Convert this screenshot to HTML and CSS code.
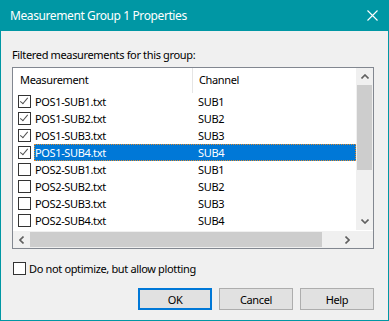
FILE: index.html
```html
<!DOCTYPE html>
<html lang="en">
<head>
<meta charset="UTF-8" />
<title>Measurement Group 1 Properties</title>
<link rel="stylesheet" href="styles.css">
</head>
<body>
  <div class="window">
    <div class="titlebar">
      <span class="title">Measurement Group 1 Properties</span>
      <svg class="close" width="11" height="11" viewBox="0 0 11 11">
        <path d="M0.5 0.5 L10.5 10.5 M10.5 0.5 L0.5 10.5" stroke="#fff" stroke-width="1.1" fill="none"/>
      </svg>
    </div>

    <div class="content">
      <div class="caption">Filtered measurements for this group:</div>

      <div class="listbox">
        <div class="list-main">
          <div class="rows">
            <div class="header">
              <div class="hcol hcol-name">Measurement</div>
              <div class="hcol">Channel</div>
            </div>
            <div class="row">
              <div class="box-cell"><span class="check on"></span></div>
              <div class="cells"><div class="cell-name">POS1-SUB1.txt</div><div class="cell-chan">SUB1</div></div>
            </div>
            <div class="row">
              <div class="box-cell"><span class="check on"></span></div>
              <div class="cells"><div class="cell-name">POS1-SUB2.txt</div><div class="cell-chan">SUB2</div></div>
            </div>
            <div class="row">
              <div class="box-cell"><span class="check on"></span></div>
              <div class="cells"><div class="cell-name">POS1-SUB3.txt</div><div class="cell-chan">SUB3</div></div>
            </div>
            <div class="row selected">
              <div class="box-cell"><span class="check on"></span></div>
              <div class="cells"><div class="cell-name">POS1-SUB4.txt</div><div class="cell-chan">SUB4</div></div>
            </div>
            <div class="row">
              <div class="box-cell"><span class="check"></span></div>
              <div class="cells"><div class="cell-name">POS2-SUB1.txt</div><div class="cell-chan">SUB1</div></div>
            </div>
            <div class="row">
              <div class="box-cell"><span class="check"></span></div>
              <div class="cells"><div class="cell-name">POS2-SUB2.txt</div><div class="cell-chan">SUB2</div></div>
            </div>
            <div class="row">
              <div class="box-cell"><span class="check"></span></div>
              <div class="cells"><div class="cell-name">POS2-SUB3.txt</div><div class="cell-chan">SUB3</div></div>
            </div>
            <div class="row">
              <div class="box-cell"><span class="check"></span></div>
              <div class="cells"><div class="cell-name">POS2-SUB4.txt</div><div class="cell-chan">SUB4</div></div>
            </div>
          </div>
          <div class="vscroll">
            <div class="sbtn">
              <svg width="8" height="5" viewBox="0 0 8 5"><path d="M0.5 4.5 L4 1 L7.5 4.5" stroke="#606060" stroke-width="1.6" fill="none"/></svg>
            </div>
            <div class="vthumb"></div>
            <div class="vtrack"></div>
            <div class="sbtn">
              <svg width="8" height="5" viewBox="0 0 8 5"><path d="M0.5 0.5 L4 4 L7.5 0.5" stroke="#606060" stroke-width="1.6" fill="none"/></svg>
            </div>
          </div>
        </div>
        <div class="hscroll">
          <div class="sbtn">
            <svg width="5" height="8" viewBox="0 0 5 8"><path d="M4.5 0.5 L1 4 L4.5 7.5" stroke="#606060" stroke-width="1.6" fill="none"/></svg>
          </div>
          <div class="hthumb"></div>
          <div class="htrack"></div>
          <div class="sbtn">
            <svg width="5" height="8" viewBox="0 0 5 8"><path d="M0.5 0.5 L4 4 L0.5 7.5" stroke="#606060" stroke-width="1.6" fill="none"/></svg>
          </div>
          <div class="corner"></div>
        </div>
      </div>

      <label class="option"><span class="check"></span>Do not optimize, but allow plotting</label>

      <div class="buttons">
        <button class="btn default">OK</button>
        <button class="btn">Cancel</button>
        <button class="btn">Help</button>
      </div>
    </div>
  </div>
</body>
</html>
```

FILE: styles.css
```css
body {
  margin: 0;
  font-family: "Noto Sans", sans-serif;
  font-size: 11px;
  letter-spacing: -0.35px;
  color: #000;
  background: #f0f0f0;
}
.window {
  width: 389px;
  height: 321px;
  box-sizing: border-box;
  border: 1px solid #0097a4;
  border-top: none;
  display: flex;
  flex-direction: column;
  background: #f0f0f0;
}
.titlebar {
  height: 31px;
  margin: 0 -1px;
  background: #0097a4;
  color: #fff;
  display: flex;
  align-items: center;
  padding: 0 11px 0 10px;
  font-size: 12px;
  letter-spacing: -0.4px;
}
.title {
  flex: 1;
}
.close {
  display: block;
}
.content {
  flex: 1;
  padding: 16px 14px 0 11px;
  display: flex;
  flex-direction: column;
}
.caption {
  height: 15px;
  line-height: 15px;
  margin-bottom: 5px;
}
.listbox {
  width: 362px;
  height: 182px;
  box-sizing: border-box;
  border: 1px solid #828790;
  background: #fff;
  display: flex;
  flex-direction: column;
}
.list-main {
  display: flex;
  height: 162px;
}
.rows {
  width: 343px;
  overflow: hidden;
}
.header {
  display: flex;
  height: 25px;
  line-height: 24px;
  white-space: nowrap;
}
.hcol {
  padding-left: 6px;
}
.hcol-name {
  width: 172px;
  padding-left: 7px;
  border-right: 1px solid #e5e5e5;
}
.row {
  display: flex;
  height: 17px;
  line-height: 17px;
  white-space: nowrap;
}
.box-cell {
  width: 21px;
  padding-left: 5px;
  box-sizing: border-box;
  display: flex;
  align-items: center;
  flex: none;
}
.cells {
  flex: 1;
  display: flex;
}
.cell-name {
  width: 158px;
  padding-left: 1px;
  box-sizing: border-box;
}
.cell-chan {
  padding-left: 6px;
}
.row.selected .cells {
  background: #0078d7;
  color: #fff;
  outline: 1px dotted #e08a2c;
  outline-offset: -1px;
}
.check {
  width: 13px;
  height: 13px;
  box-sizing: border-box;
  border: 1px solid #333;
  background: #fff;
  flex: none;
  position: relative;
}
.check.on::after {
  content: "";
  position: absolute;
  left: 3px;
  top: 0px;
  width: 3px;
  height: 7px;
  border: solid #505050;
  border-width: 0 1.5px 1.5px 0;
  transform: rotate(40deg);
}
.vscroll {
  width: 17px;
  display: flex;
  flex-direction: column;
  background: #f0f0f0;
}
.sbtn {
  width: 17px;
  height: 17px;
  display: flex;
  align-items: center;
  justify-content: center;
  background: #f0f0f0;
  flex: none;
}
.vthumb {
  height: 85px;
  margin: 0 1px;
  background: #cdcdcd;
}
.vtrack {
  flex: 1;
}
.hscroll {
  display: flex;
  height: 17px;
  background: #f0f0f0;
  margin-top: 1px;
}
.hthumb {
  width: 292px;
  margin: 1px 0;
  background: #cdcdcd;
}
.htrack {
  width: 17px;
}
.corner {
  width: 16px;
  background: #f0f0f0;
}
.option {
  display: flex;
  align-items: center;
  height: 15px;
  margin-top: 12px;
  padding-left: 1px;
}
.option .check {
  margin-right: 3px;
}
.buttons {
  display: flex;
  justify-content: flex-end;
  gap: 7px;
  margin-top: 12px;
}
.btn {
  width: 74px;
  height: 22px;
  box-sizing: border-box;
  background: #e1e1e1;
  border: 1px solid #adadad;
  font-family: "Noto Sans", sans-serif;
  font-size: 11px;
  letter-spacing: -0.35px;
  color: #000;
  padding: 0;
}
.btn.default {
  border: 2px solid #0078d7;
}
```
